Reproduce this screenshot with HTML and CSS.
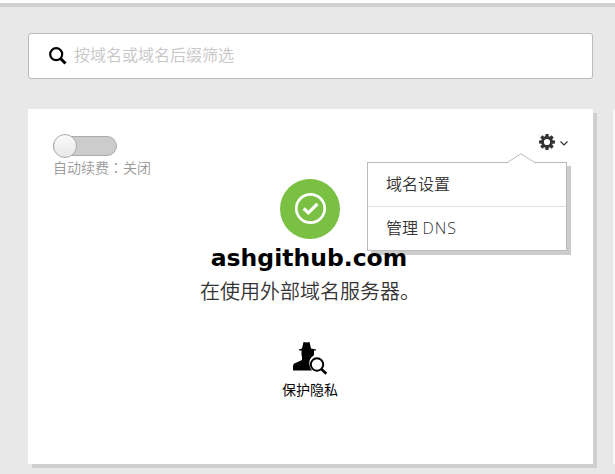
FILE: index.html
```html
<!DOCTYPE html>
<html lang="zh-CN">
<head>
<meta charset="utf-8">
<title>域名</title>
<link rel="stylesheet" href="styles.css">
</head>
<body>
<header class="topbar"></header>
<main class="page">
  <label class="search">
    <svg class="search-icon" viewBox="0 0 18 18"><circle cx="7.2" cy="7.2" r="6" fill="none" stroke="#000" stroke-width="2.2"/><path d="M11.5 11.5l5 5" stroke="#000" stroke-width="3"/></svg>
    <span class="placeholder">按域名或域名后缀筛选</span>
  </label>
  <div class="cards">
    <section class="card">
      <div class="card-head">
        <div class="renew">
          <div class="toggle"><span class="thumb"></span></div>
          <div class="renew-label">自动续费<span class="colon" lang="zh-TW">：</span>关闭</div>
        </div>
        <div class="actions">
          <svg class="gear" viewBox="-8 -8 16 16"><circle r="4.500" fill="none" stroke="#333" stroke-width="2.800"/><g fill="#333"><path id="tooth" d="M-1.500-8h3l.3 3h-3.600z"/><use href="#tooth" transform="rotate(45)"/><use href="#tooth" transform="rotate(90)"/><use href="#tooth" transform="rotate(135)"/><use href="#tooth" transform="rotate(180)"/><use href="#tooth" transform="rotate(225)"/><use href="#tooth" transform="rotate(270)"/><use href="#tooth" transform="rotate(315)"/></g></svg>
          <svg class="chevron" viewBox="0 0 8 5"><path d="M.5.5L4 4 7.500.5" fill="none" stroke="#333" stroke-width="1.2"/></svg>
          <nav class="menu">
            <svg class="menu-arrow" viewBox="0 0 30 11"><path d="M1 10L15 1l14 9v1H1z" fill="#fff"/><path d="M.5 10L15 .7 29.500 10" fill="none" stroke="#bbb"/></svg>
            <a class="menu-item">域名设置</a>
            <a class="menu-item">管理 <span class="latin">DNS</span></a>
          </nav>
        </div>
      </div>
      <div class="status">
        <svg class="status-icon" viewBox="0 0 60 60"><circle cx="30" cy="30" r="30" fill="#7ac143"/><circle cx="30.500" cy="29.500" r="14.200" fill="none" stroke="#fff" stroke-width="2.700"/><path d="M23.700 29.500l4.700 4.300 9-9" fill="none" stroke="#fff" stroke-width="3.300"/></svg>
        <h1 class="domain">ashgithub.com</h1>
        <p class="server">在使用外部域名服务器。</p>
      </div>
      <div class="privacy">
        <svg class="spy" viewBox="0 0 35 34"><path d="M10.500 1l3 .6 3-.6 1.500 6.500 5 1v1h-2v4.500l-1 1c-2.500 1.700-4 4.500-3.700 7.500.2 3 1 5 2.700 7H0v-4.500c0-1.500 1-2.500 3-3.200l6-2.800v-3.500L8.500 14V9.500H6v-1l3-1z" fill="#000"/><circle cx="24" cy="23.500" r="6.200" fill="#fff" stroke="#000" stroke-width="2"/><path d="M28.300 28l5 4.800" stroke="#000" stroke-width="2.600"/></svg>
        <span class="privacy-label">保护隐私</span>
      </div>
    </section>
    <section class="card next"></section>
  </div>
</main>
</body>
</html>
```
FILE: styles.css
```css
* { box-sizing: border-box; }
body {
  margin: 0;
  height: 474px;
  overflow: hidden;
  background: #e8e8e8;
  font-family: "Noto Sans CJK SC", sans-serif;
  color: #333;
}
.topbar { height: 7px; background: #fff; border-bottom: 4px solid #cfd0cf; }
.page { padding: 26px 0 0 28px; overflow: hidden; }
.search {
  display: flex;
  align-items: center;
  width: 565px;
  height: 46px;
  padding-left: 20px;
  background: #fff;
  border: 1px solid #bbb;
  border-radius: 3px;
}
.search-icon { width: 18px; height: 18px; margin-right: 7px; }
.placeholder { font-size: 16px; line-height: 24px; color: #c6c6c6; font-weight: 350; margin-top: -5px; }
.cards { display: flex; gap: 20px; margin-top: 30px; padding-bottom: 10px; }
.card {
  flex: none;
  width: 565px;
  height: 355px;
  background: #fff;
  box-shadow: 4px 4px 0 #cfcfcf;
}
.next { width: 2px; background: #f8f8f8; box-shadow: none; }
.card-head { display: flex; justify-content: space-between; height: 70px; padding: 25px 25px 0 25px; }
.toggle {
  display: flex;
  align-items: center;
  width: 64px;
  height: 20px;
  margin-top: 2px;
  border: 1px solid #aaa;
  border-radius: 10px;
  background: #ccc;
}
.thumb {
  flex: none;
  width: 24px;
  height: 24px;
  margin-left: -1px;
  border: 1px solid #aaa;
  border-radius: 50%;
  background: linear-gradient(#fafafa, #e8e8e8);
}
.renew-label { margin-top: 1px; font-size: 14px; line-height: 20px; color: #999; font-weight: 350; }
.colon { font-family: "Noto Sans CJK TC", sans-serif; }
.actions { position: relative; display: flex; align-items: center; gap: 5px; height: 16px; }
.gear { width: 16px; height: 16px; }
.chevron { width: 8px; height: 5px; margin-top: 2px; }
.menu {
  position: absolute;
  right: 1px;
  top: 28px;
  z-index: 1;
  width: 200px;
  background: #fff;
  border: 1px solid #bbb;
  box-shadow: 4px 4px 0 rgba(0, 0, 0, .2);
}
.menu-arrow { position: absolute; left: 138px; top: -10px; width: 30px; height: 11px; }
.menu-item { display: block; height: 43px; padding-left: 18px; font-size: 16px; line-height: 40px; font-weight: 350; }
.menu-item + .menu-item { height: 44px; border-top: 1px solid #ddd; }
.latin { margin-left: 1px; font-family: "Open Sans", sans-serif; font-weight: 300; line-height: 1; letter-spacing: .9px; }
.status { display: flex; flex-direction: column; align-items: center; }
.status-icon { width: 60px; height: 60px; margin-right: 1px; }
.domain { margin: 4px 3px 0 0; font: bold 23.5px/30px "DejaVu Sans", sans-serif; color: #000; }
.server { margin: 2px 1px 0 0; font-size: 20px; line-height: 32px; font-weight: 350; }
.privacy { display: flex; flex-direction: column; align-items: center; margin-top: 34px; color: #000; }
.spy { width: 35px; height: 34px; }
.privacy-label { margin: 4px 1px 0 0; font-size: 14px; line-height: 20px; }
```
